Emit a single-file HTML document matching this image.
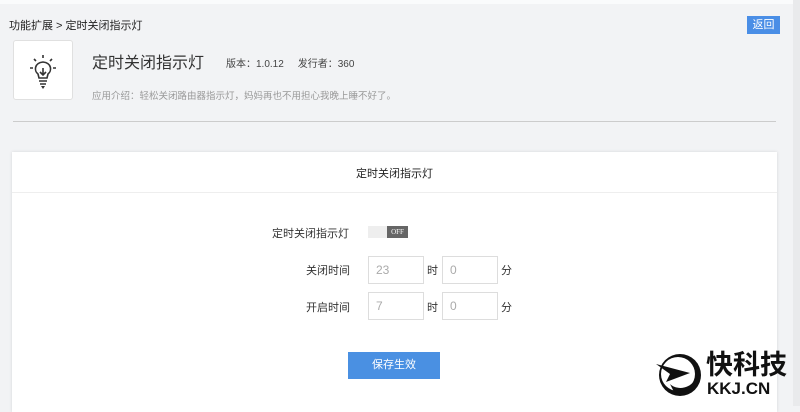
<!DOCTYPE html>
<html><head><meta charset="utf-8"><style>
*{margin:0;padding:0;box-sizing:border-box}
body{width:800px;height:406px;overflow:hidden;background:#f2f3f5;font-family:"Liberation Sans","Noto Sans CJK SC",sans-serif;color:#333;position:relative}
.a{position:absolute;white-space:nowrap}
.inp{position:absolute;width:56px;height:28px;border:1px solid #ddd;background:#fff;color:#aaa;font-size:12px;line-height:26px;padding-left:7px}
</style></head><body>
<div class="a" style="left:0;top:0;width:800px;height:4px;background:#fafbfc"></div>
<div class="a" style="left:793px;top:0;width:7px;height:406px;background:#e9eaec"></div>
<div class="a" style="left:9px;top:17px;font-size:11px;color:#222">功能扩展 &gt; 定时关闭指示灯</div>
<div class="a" style="left:747px;top:16px;width:33px;height:18px;background:#4a8ee6;color:#fff;font-size:11px;line-height:18px;text-align:center">返回</div>
<div class="a" style="left:13px;top:40px;width:60px;height:60px;background:#fff;border:1px solid #e0e0e0;border-radius:3px">
<svg width="58" height="58" viewBox="0 0 58 58"><g stroke="#333" stroke-width="1.6" fill="none"><path d="M24 33 C20 30 20 22 29 21 C38 22 38 30 34 33 L33 37 L25 37 Z"/><path d="M29 27v6M26 31l3 3 3-3"/><path d="M29 14v3M20 18l2 2M38 18l-2 2M16 27h3M39 27h3"/><path d="M25 40h8M26 43h6"/></g><path d="M27 45h4l-2 3z" fill="#333"/></svg></div>
<div class="a" style="left:92px;top:49px;font-size:16px;color:#333">定时关闭指示灯</div>
<div class="a" style="left:226px;top:55px;font-size:10px;color:#444">版本：1.0.12&nbsp;&nbsp;&nbsp;&nbsp;&nbsp;发行者：360</div>
<div class="a" style="left:92px;top:88px;font-size:9.5px;color:#999">应用介绍：轻松关闭路由器指示灯，妈妈再也不用担心我晚上睡不好了。</div>
<div class="a" style="left:13px;top:121px;width:763px;height:1px;background:#ccc"></div>
<div class="a" style="left:12px;top:152px;width:765px;height:260px;background:#fff;box-shadow:0 0 3px rgba(0,0,0,.12)"></div>
<div class="a" style="left:12px;top:192px;width:765px;height:1px;background:#eee"></div>
<div class="a" style="left:12px;top:165px;width:765px;text-align:center;font-size:11px;color:#222">定时关闭指示灯</div>
<div class="a" style="left:272px;top:225px;font-size:11px;color:#333">定时关闭指示灯</div>
<div class="a" style="left:368px;top:226px;width:40px;height:12px;background:#eee"></div>
<div class="a" style="left:387px;top:226px;width:21px;height:12px;background:#666;color:#fff;font-size:7px;line-height:12px;text-align:center;font-family:'Liberation Serif',serif">OFF</div>
<div class="a" style="left:306px;top:262px;font-size:11px">关闭时间</div>
<div class="inp" style="left:368px;top:256px">23</div>
<div class="a" style="left:427px;top:262px;font-size:11px">时</div>
<div class="inp" style="left:442px;top:256px">0</div>
<div class="a" style="left:501px;top:262px;font-size:11px">分</div>
<div class="a" style="left:306px;top:299px;font-size:11px">开启时间</div>
<div class="inp" style="left:368px;top:292px">7</div>
<div class="a" style="left:427px;top:299px;font-size:11px">时</div>
<div class="inp" style="left:442px;top:292px">0</div>
<div class="a" style="left:501px;top:299px;font-size:11px">分</div>
<div class="a" style="left:348px;top:352px;width:92px;height:27px;background:#4a90e2;color:#fff;font-size:11px;line-height:27px;text-align:center">保存生效</div>
<svg class="a" style="left:656px;top:350px" width="48" height="50" viewBox="0 0 48 50"><circle cx="24" cy="25" r="21" fill="#111"/><circle cx="22" cy="24" r="17" fill="#fff"/><path d="M14 34 C20 40 34 40 40 28 C38 38 28 44 18 42 Z" fill="#111"/><path d="M0 14 L34 23 L10 32 L14 24 Z" fill="#111"/></svg>
<div class="a" style="left:706px;top:350px;font-size:27px;font-weight:bold;color:#111;line-height:30px">快科技</div>
<div class="a" style="left:707px;top:380px;font-size:17px;font-weight:bold;color:#111;line-height:18px">KKJ.CN</div>
</body></html>
